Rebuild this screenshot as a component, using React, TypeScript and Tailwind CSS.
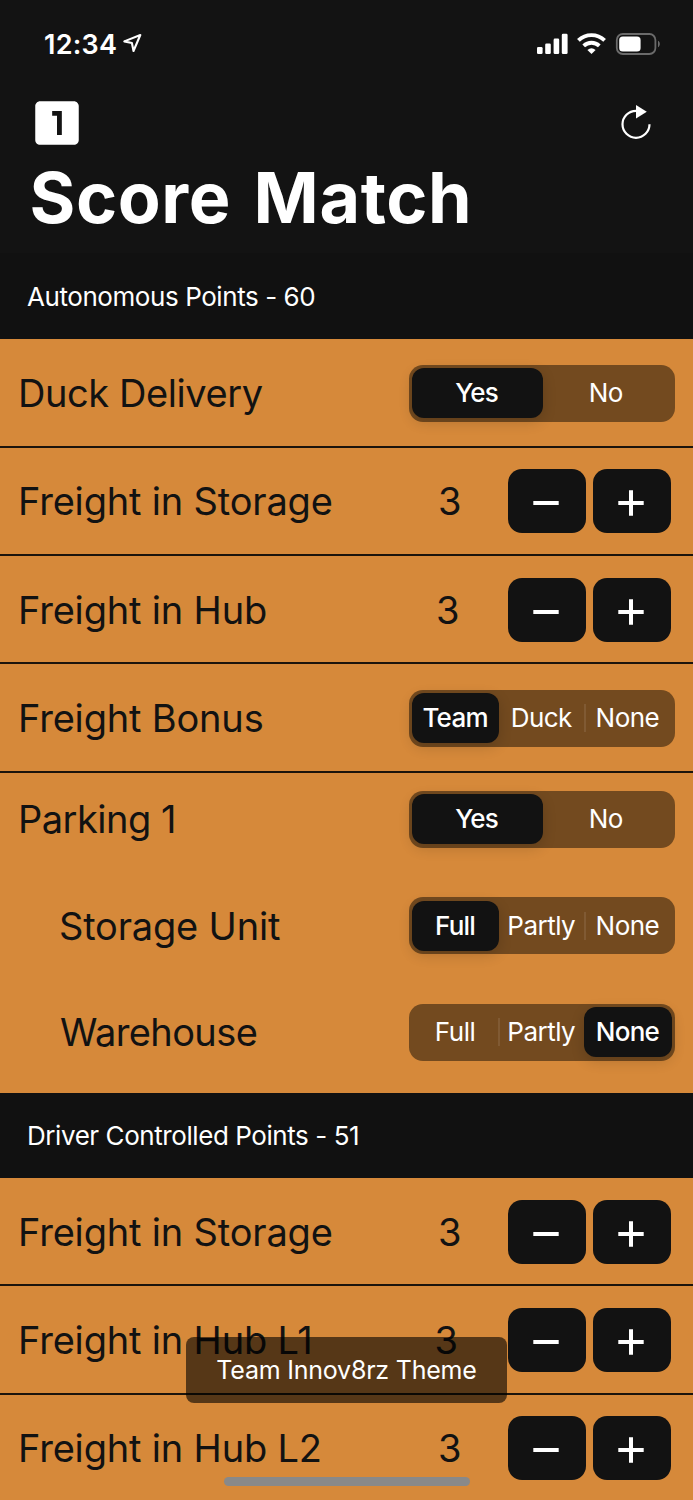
import React from "react";
import { MdLooksOne } from "react-icons/md";

function StatusBar() {
  return (
    <div className="flex h-[88px] items-center pl-[44px] pr-[33px]">
      <span className="text-[27px] font-semibold leading-none tracking-[0.25px]">12:34</span>
      <svg className="ml-[6px] mt-[-2px]" width="20" height="20" viewBox="0 0 20 20" fill="none" stroke="white" strokeWidth="2.1" strokeLinejoin="round">
        <path d="M1.3 8.4 17.3 2 10.5 18 8.9 10Z" />
      </svg>
      <div className="ml-auto flex items-center">
        <svg width="124" height="24" viewBox="0 0 124 24">
          <g fill="white">
            <rect x="1" y="15" width="5.6" height="7" rx="1.3" />
            <rect x="9.2" y="11.4" width="5.6" height="10.6" rx="1.3" />
            <rect x="17.6" y="6.6" width="5.6" height="15.4" rx="1.3" />
            <rect x="25.8" y="1.8" width="5.8" height="20.2" rx="1.3" />
            <path d="M55.5 22 51.4 18a6.4 6.4 0 0 1 8.2 0Z" />
          </g>
          <g fill="none" stroke="white" strokeWidth="3.9">
            <path d="M42.4 8.4a19 19 0 0 1 26.2 0" />
            <path d="M47.7 13.8a11.4 11.4 0 0 1 15.6 0" />
          </g>
          <rect x="80.8" y="2" width="38.6" height="20" rx="6" fill="none" stroke="#6b6b6b" strokeWidth="1.8" />
          <rect x="83.2" y="4.4" width="21.4" height="15.2" rx="3.6" fill="white" />
          <path d="M122 8.8c2.4 1.2 2.4 5.2 0 6.4Z" fill="#6b6b6b" />
        </svg>
      </div>
    </div>
  );
}

function SectionHeader({ title, height }: { title: string; height: string }) {
  return (
    <div className={`flex shrink-0 items-center bg-[#111111] pl-[27px] pt-[1px] ${height}`}>
      <h2 className="text-[26px] leading-none tracking-[-0.43px] text-white">{title}</h2>
    </div>
  );
}

function Segmented({ options, selected }: { options: string[]; selected: number }) {
  return (
    <div className="flex h-[57px] w-[266.5px] shrink-0 rounded-[14px] bg-[#734a1f] py-[3.5px] pl-[3.5px] pr-[4.5px] text-[26px] leading-none text-white">
      {options.map((option, i) => {
        const divided = i > 0 && i !== selected && i - 1 !== selected;
        return (
          <div key={option} className="flex flex-1 basis-0 items-center">
            {divided && <div className="-mr-[2px] h-[28px] w-[2px] bg-[#805a33]" />}
            <button
              className={
                i === selected
                  ? "-mr-[1.25px] -ml-[0.25px] h-full grow rounded-[12px] bg-[#121212] pr-[1px] text-center font-medium tracking-[-0.75px] shadow-[0_4px_14px_rgba(0,0,0,0.16)]"
                  : "h-full grow text-center tracking-[-0.5px]"
              }
            >
              {option}
            </button>
          </div>
        );
      })}
    </div>
  );
}

function StepButton({ plus = false }: { plus?: boolean }) {
  return (
    <button className="flex h-[64px] w-[78px] items-center justify-center rounded-[14px] bg-[#121212]">
      <svg width="26" height="26" viewBox="0 0 26 26" className="mt-[4px] mr-[2px]" stroke="white" strokeWidth="4">
        <path d={plus ? "M0.3 13h25.4M13 0.3v25.4" : "M0.3 13h25.4"} />
      </svg>
    </button>
  );
}

function Label({ children, tracking = "tracking-[-0.18px]" }: { children: string; tracking?: string }) {
  return <span className={`text-[38px] leading-none whitespace-nowrap ${tracking}`}>{children}</span>;
}

const rowClass = "flex h-[108.33px] shrink-0 items-center justify-between border-b-2 border-[#1c140c] pl-[18px] pt-[1px]";

type RowProps = { label: string; tracking?: string };

function ChoiceRow({ label, tracking, options, selected }: RowProps & { options: string[]; selected: number }) {
  return (
    <div className={`${rowClass} pr-[18px]`}>
      <Label tracking={tracking}>{label}</Label>
      <Segmented options={options} selected={selected} />
    </div>
  );
}

function CounterRow({ label, tracking, value, gap = "mr-[39.5px]" }: RowProps & { value: number; gap?: string }) {
  return (
    <div className={`${rowClass} pr-[22px]`}>
      <Label tracking={tracking}>{label}</Label>
      <div className="flex items-center gap-[7px]">
        <span className={`${gap} text-[38px] leading-none`}>{value}</span>
        <StepButton />
        <StepButton plus />
      </div>
    </div>
  );
}

export default function App() {
  return (
    <div className="relative flex h-[1500px] w-[693px] flex-col overflow-hidden bg-[#d6893a] font-['Inter',sans-serif] text-[#121212]">
      <header className="h-[253px] shrink-0 bg-[#131313] text-white">
        <StatusBar />
        <div className="flex h-[72px] items-center justify-between pl-[28px] pr-[41px]">
          <MdLooksOne size={58} className="-mt-[3px]" />
          <svg className="-mt-[6px]" width="32" height="36" viewBox="0 0 32 36">
            <path d="M16 7.8A13.5 13.5 0 1 0 29.5 21.3" fill="none" stroke="white" strokeWidth="2.2" />
            <path d="M16 2 26.8 8.8 16 15.6Z" fill="white" />
          </svg>
        </div>
        <h1 className="pl-[29.5px] pt-[2.5px] text-[70px] font-bold leading-[70px] tracking-[0.6px] [word-spacing:5.5px]">Score Match</h1>
      </header>

      <SectionHeader title="Autonomous Points - 60" height="h-[86.4px]" />
      <ChoiceRow label="Duck Delivery" tracking="tracking-[-0.42px]" options={["Yes", "No"]} selected={0} />
      <CounterRow label="Freight in Storage" value={3} />
      <CounterRow label="Freight in Hub" value={3} gap="mr-[41.5px]" />
      <ChoiceRow label="Freight Bonus" options={["Team", "Duck", "None"]} selected={0} />
      <div className="flex h-[320.3px] shrink-0 flex-col gap-[49.5px] pl-[18px] pr-[18px] pt-[18.2px]">
        <div className="flex items-center justify-between">
          <Label tracking="tracking-[-0.5px]">Parking 1</Label>
          <Segmented options={["Yes", "No"]} selected={0} />
        </div>
        <div className="flex items-center justify-between pl-[41px]">
          <Label>Storage Unit</Label>
          <Segmented options={["Full", "Partly", "None"]} selected={0} />
        </div>
        <div className="flex items-center justify-between pl-[42px]">
          <Label tracking="tracking-[-0.6px]">Warehouse</Label>
          <Segmented options={["Full", "Partly", "None"]} selected={2} />
        </div>
      </div>

      <SectionHeader title="Driver Controlled Points - 51" height="h-[85px]" />
      <CounterRow label="Freight in Storage" value={3} />
      <CounterRow label="Freight in Hub L1" value={3} gap="mr-[43px]" />
      <CounterRow label="Freight in Hub L2" value={3} />

      <div className="absolute left-[186px] top-[1337px] flex h-[66px] w-[321px] items-center justify-center rounded-[8px] bg-black/60 text-[25px] leading-none tracking-[-0.22px] text-white">
        Team Innov8rz Theme
      </div>
      <div className="absolute left-[223.5px] top-[1477px] h-[8.5px] w-[246.5px] rounded-full bg-[#898989]" />
    </div>
  );
}
